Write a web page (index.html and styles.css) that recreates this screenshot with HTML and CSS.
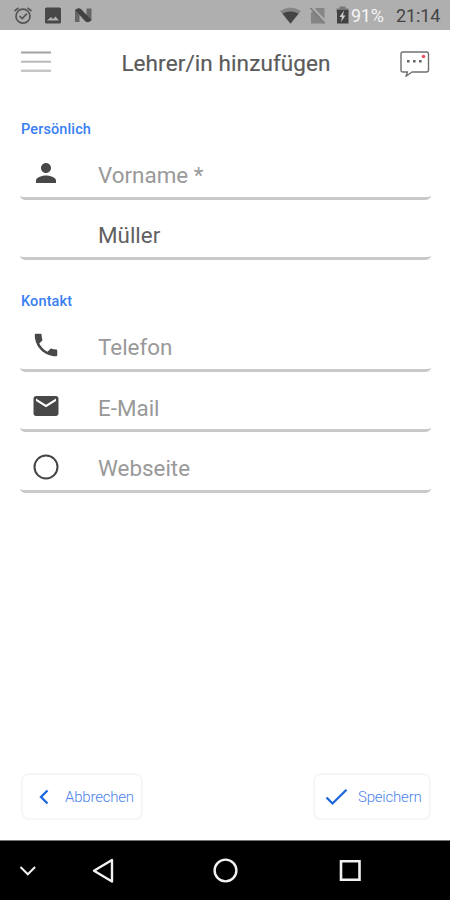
FILE: index.html
```html
<!DOCTYPE html>
<html lang="de">
<head>
<meta charset="utf-8">
<title>Lehrer/in hinzufügen</title>
<link rel="stylesheet" href="styles.css">
</head>
<body>
<div class="screen">
  <div class="status">
    <svg class="status-left" width="96" height="30" viewBox="0 0 96 30">
      <g fill="none" stroke="#555" stroke-width="1.7"><circle cx="23" cy="16.2" r="7"/><path d="M14.5 11l4-3.2M31.500 11l-4-3.200M19.500 16l2.700 2.600 4.700-5"/></g>
      <path fill="#484848" fill-rule="evenodd" d="M46.500 7.500h13q1.500 0 1.500 1.500v13q0 1.500-1.500 1.500h-13q-1.500 0-1.500-1.500V9q0-1.500 1.500-1.500zM47 20.500h12l-3.500-4-2.500 2.500-2-2z"/>
      <path fill="#666" d="M75 10.500l4.500-2V22H75zM86.500 8.500H91.500V20.500l-5 1.500z"/><path fill="#424242" d="M75 10q3-3 6-1l10.500 11q-3 3.500-6 1.500z"/>
    </svg>
    <svg class="status-right" width="70" height="30" viewBox="280 0 70 30">
      <path fill="#858585" d="M280 11q10.500-7 21 0L290.500 24z"/><path fill="#444" d="M282.500 13.500q8-4 16 0L290.500 23.500z"/>
      <path fill="#858585" d="M316 8h8.500v15.500H311V13z"/><path stroke="#afafaf" stroke-width="2" d="M312.500 7.500l14 15"/><path stroke="#7d7d7d" stroke-width="1.600" d="M310.500 8l14 15.500"/>
      <path fill="#777" d="M339.500 6.500h6v2h3v4h-12v-4h3z"/><path fill="#414141" d="M337 10h11.500v13.500H337z"/><path fill="#ccc" d="M344 10.500l-4.500 6.500h2.500l-1 5 4.500-6.500H343z"/>
    </svg>
    <span class="percent">91%</span>
    <span class="clock">21:14</span>
  </div>

  <header class="header">
    <svg class="menu" width="30" height="24" viewBox="0 0 30 24"><path stroke="#a3a3a3" stroke-width="2" d="M0 1.500h30"/><path stroke="#b9b9b9" stroke-width="2" d="M0 10.700h30"/><path stroke="#c6c6c6" stroke-width="2.500" d="M0 19.800h30"/></svg>
    <h1 class="title">Lehrer/in hinzufügen</h1>
    <svg class="chat" width="30" height="28" viewBox="0 0 30 28">
      <path fill="none" stroke="#707070" stroke-width="1.400" stroke-linejoin="round" d="M3 2h23.500q2 0 2 2v16q0 2-2 2H12l-6 4.300 1.500-4.300H3q-2 0-2-2V4q0-2 2-2z"/>
      <path fill="#666" d="M7 10h2.600v2.600H7zM13 10h2.600v2.600h-2.600zM19 10h2.600v2.600h-2.600z"/><circle cx="23.500" cy="6.500" r="1.800" fill="#ee5060"/>
    </svg>
  </header>

  <main class="form">
    <section class="group">
      <h2 class="label">Persönlich</h2>
      <div class="field"><svg class="icon" width="30" height="30" viewBox="0 0 24 24"><path d="M12 12c2.210 0 4-1.790 4-4s-1.790-4-4-4-4 1.790-4 4 1.790 4 4 4zm0 2c-2.670 0-8 1.340-8 4v2h16v-2c0-2.660-5.330-4-8-4z"/></svg><span class="text">Vorname *</span></div>
      <div class="field"><span class="icon"></span><span class="text value">Müller</span></div>
    </section>
    <section class="group contact">
      <h2 class="label">Kontakt</h2>
      <div class="field"><svg class="icon" width="30" height="30" viewBox="0 0 24 24"><path d="M6.620 10.790c1.440 2.830 3.760 5.140 6.590 6.590l2.200-2.200c.27-.27.67-.36 1.020-.24 1.120.37 2.330.57 3.570.57.550 0 1 .45 1 1V20c0 .55-.45 1-1 1-9.390 0-17-7.610-17-17 0-.55.45-1 1-1h3.500c.55 0 1 .45 1 1 0 1.250.2 2.450.57 3.570.11.35.03.74-.25 1.020l-2.200 2.200z"/></svg><span class="text">Telefon</span></div>
      <div class="field"><svg class="icon" width="30" height="30" viewBox="0 0 24 24"><path d="M20 4H4c-1.100 0-1.990.9-1.990 2L2 18c0 1.100.9 2 2 2h16c1.100 0 2-.9 2-2V6c0-1.100-.9-2-2-2zm0 4l-8 5-8-5V6l8 5 8-5v2z"/></svg><span class="text">E-Mail</span></div>
      <div class="field"><svg class="icon" width="30" height="30" viewBox="0 0 30 30"><circle class="ring" cx="15" cy="15" r="11.500"/></svg><span class="text">Webseite</span></div>
    </section>
  </main>

  <div class="actions">
    <div class="button cancel"><svg width="10" height="16" viewBox="0 0 10 16"><path d="M8.500 1.500L2 8l6.500 6.500"/></svg><span>Abbrechen</span></div>
    <div class="button save"><svg width="23" height="18" viewBox="0 0 23 18"><path d="M1.500 9.500l6 6L21.500 1.700"/></svg><span>Speichern</span></div>
  </div>

  <nav class="nav">
    <svg width="450" height="59" viewBox="0 0 450 59" fill="none" stroke="#f2f2f2">
      <path stroke-width="2" d="M20.500 26l7.300 7.300 7.300-7.300"/>
      <path stroke-width="2.400" stroke-linejoin="round" d="M112 19v21.500L94 29.700z"/>
      <circle cx="225.500" cy="29.500" r="10.900" stroke-width="2.400"/>
      <path stroke-width="2.600" d="M341 20.300h18.500v18.500H341z"/>
    </svg>
  </nav>
</div>
</body>
</html>
```
FILE: styles.css
```css
* { box-sizing: border-box; }
body { margin: 0; background: #fff; font-family: Roboto, "Liberation Sans", sans-serif; }
svg { display: block; flex: none; }
.screen { width: 450px; height: 900px; display: flex; flex-direction: column; overflow: hidden; }
.status { height: 30px; background: #afafaf; display: flex; align-items: center; flex: none; }
.status-right { margin-left: 184px; }
.percent { width: 46px; padding-left: 1px; font-size: 18px; line-height: 30px; padding-top: 2px; color: #f5f5f5; letter-spacing: -0.3px; }
.clock { font-size: 18px; line-height: 30px; padding-top: 2px; color: #444; letter-spacing: -0.1px; }
.header { height: 66px; padding: 0 20px; display: flex; justify-content: space-between; align-items: center; flex: none; }
.title { margin: 0 0 0 1px; font-size: 22.5px; line-height: 30px; font-weight: 400; -webkit-text-stroke: 0.2px #5b5b5b; letter-spacing: 0.1px; color: #5b5b5b; white-space: nowrap; }
.menu { margin-left: 1px; }
.chat { margin-top: 2px; }
.form { padding: 0 19px 0 20px; flex: 1; }
.group { padding-top: 25px; }
.contact { padding-top: 33px; }
.label { margin: 0; height: 18px; padding-left: 1px; font-size: 14.500px; line-height: 18px; font-weight: 500; letter-spacing: 0.12px; color: #3a80f4; }
.field { height: 60.600px; display: flex; align-items: center; border-bottom: 3px solid #c9c9c9; border-radius: 5px; padding: 15px 0 0 10px; }
.icon { width: 30px; fill: #484848; margin: -4px 37.500px 0 0.500px; }
.ring { fill: none; stroke: #444; stroke-width: 2; }
.text { font-size: 22.400px; line-height: 26px; color: #999; white-space: nowrap; padding-bottom: 1px; }
.value { color: #606060; }
.actions { height: 48px; margin: 0 19px 19px 21px; display: flex; justify-content: space-between; flex: none; }
.button { height: 47px; display: flex; align-items: center; border: 2px solid #f4f6f7; border-radius: 8px; font-size: 15px; font-weight: 300; letter-spacing: -0.2px; color: #4b82ec; white-space: nowrap; }
.button path { fill: none; stroke: #1b66df; stroke-width: 2.300; }
.cancel { width: 122px; padding-left: 16px; gap: 16px; }
.save { width: 118px; padding-left: 10px; gap: 10px; }
.nav { height: 60px; background: #000; border-top: 1px solid #777; flex: none; }
```
